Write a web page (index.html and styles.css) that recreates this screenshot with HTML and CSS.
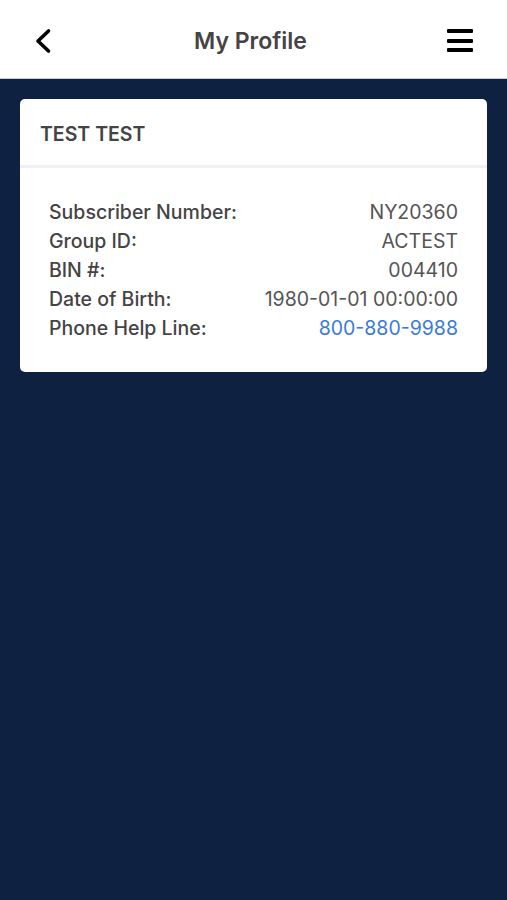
FILE: index.html
```html
<!DOCTYPE html>
<html lang="en">
<head>
    <meta charset="UTF-8" />
    <title>My Profile</title>
    <meta name="viewport" content="width=device-width, initial-scale=1.0" />
    <link rel="stylesheet" href="styles.css">
</head>
<body>

<header class="topbar">
    <button class="icon-btn back" aria-label="Back">
        <svg width="18" height="26" viewBox="0 0 18 26">
            <path d="M14.5 3 L4 13 L14.5 23" fill="none" stroke="#000" stroke-width="3.6" stroke-linecap="round" stroke-linejoin="round"/>
        </svg>
    </button>
    <h1 class="title">My Profile</h1>
    <button class="icon-btn menu" aria-label="Menu">
        <span></span><span></span><span></span>
    </button>
</header>

<main class="content">
    <div class="card">
        <div class="card-head">TEST TEST</div>
        <div class="card-body">
            <div class="row"><span class="label">Subscriber Number:</span><span class="value">NY20360</span></div>
            <div class="row"><span class="label">Group ID:</span><span class="value">ACTEST</span></div>
            <div class="row"><span class="label">BIN #:</span><span class="value">004410</span></div>
            <div class="row"><span class="label">Date of Birth:</span><span class="value">1980-01-01 00:00:00</span></div>
            <div class="row"><span class="label">Phone Help Line:</span><a class="value link" href="#">800-880-9988</a></div>
        </div>
    </div>
</main>

</body>
</html>
```

FILE: styles.css
```css
* {
  box-sizing: border-box;
}
body {
  margin: 0;
  font-family: Inter, "Liberation Sans", Arial, sans-serif;
  background-color: #0f2141;
  min-height: 900px;
}
.topbar {
  background: white;
  height: 79px;
  display: flex;
  align-items: center;
  justify-content: space-between;
  padding: 3px 34px 0 34px;
  border-bottom: 1px solid #c8ccd4;
}
.icon-btn {
  background: none;
  border: none;
  padding: 0;
  cursor: pointer;
}
.back {
  width: 20px;
  height: 26px;
  display: flex;
  align-items: center;
}
.menu {
  width: 26px;
  display: flex;
  flex-direction: column;
  gap: 5.5px;
}
.menu span {
  display: block;
  height: 4px;
  background: #000;
  border-radius: 1px;
}
.title {
  margin: 0;
  font-size: 23px;
  font-weight: 600;
  color: #444;
}
.content {
  padding: 20px 20px;
}
.card {
  background: white;
  border-radius: 5px;
  overflow: hidden;
}
.card-head {
  height: 69px;
  padding: 3px 20px 0 20px;
  display: flex;
  align-items: center;
  font-size: 19.5px;
  font-weight: 600;
  color: #444;
  border-bottom: 3px solid #eef0f2;
}
.card-body {
  padding: 30px 29px 29px 29px;
}
.row {
  display: flex;
  justify-content: space-between;
  font-size: 19.5px;
  line-height: 29px;
}
.label {
  color: #444;
  font-weight: 500;
}
.value {
  color: #555;
}
.link {
  color: #3a7bd5;
  text-decoration: none;
}
```
